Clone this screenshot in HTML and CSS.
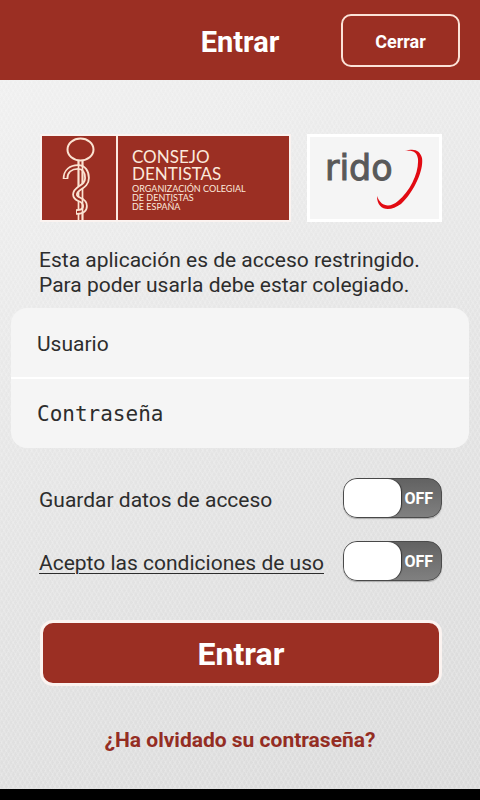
FILE: index.html
```html
<!DOCTYPE html>
<html lang="es">
<head>
<meta charset="utf-8">
<meta name="viewport" content="width=device-width, initial-scale=1">
<title>Entrar</title>
<link rel="stylesheet" href="styles.css">
</head>
<body>
<header class="topbar">
  <h1 class="topbar-title">Entrar</h1>
  <button class="close" type="button">Cerrar</button>
</header>
<main class="content">
  <div class="logos">
    <div class="logo-consejo">
      <svg class="emblem" viewBox="0 0 74 84" fill="none" aria-hidden="true">
        <ellipse cx="38.500" cy="13.500" rx="13" ry="11" stroke="#fbe3d2" stroke-width="2"/>
        <path d="M36.500 24V84M40.500 24V84" stroke="#fbe3d2" stroke-width="1.700"/>
        <path d="M23.500 43C23.500 35 29 31 36 31C42 31 45 36 45 42C45 52 33 51 33 58.500C33 65 43 62 43 70C43 74 40 76 34 76" stroke="#fbe3d2" stroke-width="5.600" stroke-linejoin="round"/>
        <path d="M23.500 42C23.500 35 29 31 36 31C42 31 45 36 45 42C45 52 33 51 33 58.500C33 65 43 62 43 70C43 74 40 76 35 76" stroke="#9b2f23" stroke-width="2" stroke-linejoin="round"/>
        <path d="M36.500 24V50M40.500 24V47M40.500 62V84" stroke="#fbe3d2" stroke-width="1.700"/>
      </svg>
      <div class="consejo-text">
        <span class="consejo-name">CONSEJO<br>DENTISTAS</span>
        <span class="consejo-sub">ORGANIZACIÓN COLEGIAL<br>DE DENTISTAS<br>DE ESPAÑA</span>
      </div>
    </div>
    <div class="logo-rido">
      <span class="rido-name">rido</span>
      <svg class="rido-swoosh" viewBox="0 0 48 62" aria-hidden="true">
        <path d="M29 3C38 0 44 2 46 10C48 23 37 45 25 56C14 64 1 63 1 48C5 59 14 60 22 53C34 43 43 25 42 11C41 4 37 2 29 3Z" fill="#e20a12"/>
      </svg>
    </div>
  </div>
  <p class="notice">Esta aplicación es de acceso restringido.<br>Para poder usarla debe estar colegiado.</p>
  <form class="form">
    <div class="fields">
      <input class="field" type="text" placeholder="Usuario" aria-label="Usuario">
      <input class="field field-password" type="password" placeholder="Contraseña" aria-label="Contraseña">
    </div>
    <div class="options">
      <div class="option">
        <label for="save">Guardar datos de acceso</label>
        <span class="switch"><input id="save" type="checkbox"><span class="switch-text" aria-hidden="true">OFF</span></span>
      </div>
      <div class="option">
        <a class="terms" id="terms" href="#condiciones">Acepto las condiciones de uso</a>
        <span class="switch"><input type="checkbox" aria-labelledby="terms"><span class="switch-text" aria-hidden="true">OFF</span></span>
      </div>
    </div>
    <button class="submit" type="submit">Entrar</button>
  </form>
  <a class="forgot" href="#recuperar">¿Ha olvidado su contraseña?</a>
</main>
<footer class="bottombar"></footer>
</body>
</html>
```
FILE: styles.css
```css
* {
  box-sizing: border-box;
}

body {
  margin: 0;
  min-height: 100vh;
  display: flex;
  flex-direction: column;
  font-family: Roboto, "Liberation Sans", sans-serif;
  font-size: 21px;
  line-height: 25px;
  color: #2d2d2d;
}

button,
input {
  font: inherit;
  margin: 0;
}

.topbar {
  display: grid;
  grid-template-columns: 1fr auto 1fr;
  align-items: center;
  height: 80px;
  padding: 1px 20px 0;
  background: #9b2f23;
}

.topbar-title {
  grid-column: 2;
  margin: 0;
  padding-top: 2px;
  color: #fff;
  font-size: 29px;
  line-height: 36px;
}

.close {
  justify-self: end;
  width: 119px;
  height: 53px;
  padding-top: 3px;
  border: 2px solid #fbe3d8;
  border-radius: 10px;
  background: transparent;
  color: #fff;
  font-size: 18px;
  font-weight: 700;
}

.content {
  flex: 1;
  display: flex;
  flex-direction: column;
  padding: 54px 11px 0;
  background:
    repeating-linear-gradient(60deg, rgba(255, 255, 255, 0.14) 0 1px, transparent 2px 4px),
    repeating-linear-gradient(120deg, rgba(255, 255, 255, 0.14) 0 1px, transparent 2px 4px),
    linear-gradient(155deg, #f0f0f0 0%, #e4e4e4 50%, #dadada 100%);
}

.logos {
  display: flex;
  gap: 16px;
  height: 88px;
  margin: 0 27px 0 29px;
}

.logo-consejo {
  flex: 1;
  display: flex;
  border: 2px solid #fbf3f0;
  background: #9b2f23;
}

.emblem {
  width: 74px;
  height: 84px;
  flex: none;
}

.consejo-text {
  flex: 1;
  padding: 12px 0 0 14px;
  border-left: 2px solid #fbe9e0;
  color: #fbe9dc;
  font-family: Lato, sans-serif;
}

.consejo-name,
.consejo-sub {
  display: block;
}

.consejo-name {
  font-size: 17px;
  line-height: 17px;
}

.consejo-sub {
  margin-top: 2px;
  font-size: 9px;
  line-height: 9px;
}

.logo-rido {
  display: flex;
  width: 135px;
  padding: 11px 0 0 15px;
  border: 3px solid #fff;
  background: #f5f5f5;
}

.rido-name {
  color: #595959;
  font-family: "DejaVu Sans", sans-serif;
  font-size: 35px;
  line-height: 40px;
  -webkit-text-stroke: 1px #595959;
}

.rido-swoosh {
  flex: none;
  width: 48px;
  height: 62px;
  margin-left: -17px;
}

.notice {
  margin: 26px 28px 10px;
}

.fields {
  border-radius: 16px;
  overflow: hidden;
  background: #f5f5f5;
}

.field {
  display: block;
  width: 100%;
  height: 69px;
  padding: 2px 26px 0;
  border: 0;
  background: transparent;
}

.field::placeholder {
  color: #2d2d2d;
  opacity: 1;
}

.field-password {
  height: 71px;
  border-top: 2px solid #fff;
  padding-top: 0;
  font-family: "DejaVu Sans Mono", monospace;
}

.options {
  display: grid;
  gap: 23px;
  margin: 30px 27px 39px 28px;
}

.option {
  display: flex;
  justify-content: space-between;
  align-items: center;
}

.option label,
.terms {
  padding-top: 5px;
}

.terms {
  color: inherit;
  text-decoration-thickness: 1px;
  text-underline-offset: 3px;
}

.switch {
  display: grid;
  align-items: center;
  width: 99px;
  height: 40px;
  border: 1px solid #4b4b4b;
  border-radius: 14px;
  background: linear-gradient(#626262, #808080);
  box-shadow: 0 1px 1px #aaa;
}

.switch input {
  grid-area: 1 / 1;
  appearance: none;
  width: 57px;
  height: 38px;
  border-radius: 13px;
  background: #fff;
  box-shadow: 1px 0 1px #333;
}

.switch-text {
  grid-area: 1 / 1;
  justify-self: end;
  padding-right: 8px;
  color: #fff;
  font-size: 16px;
  font-weight: 700;
}

.submit {
  display: block;
  width: calc(100% - 56px);
  height: 66px;
  margin: 0 27px 0 29px;
  padding-top: 3px;
  border: 3px solid #fbf3f0;
  border-radius: 13px;
  background: #9b2f23;
  color: #fff;
  font-size: 32px;
  font-weight: 700;
}

.forgot {
  align-self: center;
  margin-top: 42px;
  color: #942d23;
  font-weight: 700;
  text-decoration: none;
}

.bottombar {
  height: 11px;
  background: #000;
}
```
